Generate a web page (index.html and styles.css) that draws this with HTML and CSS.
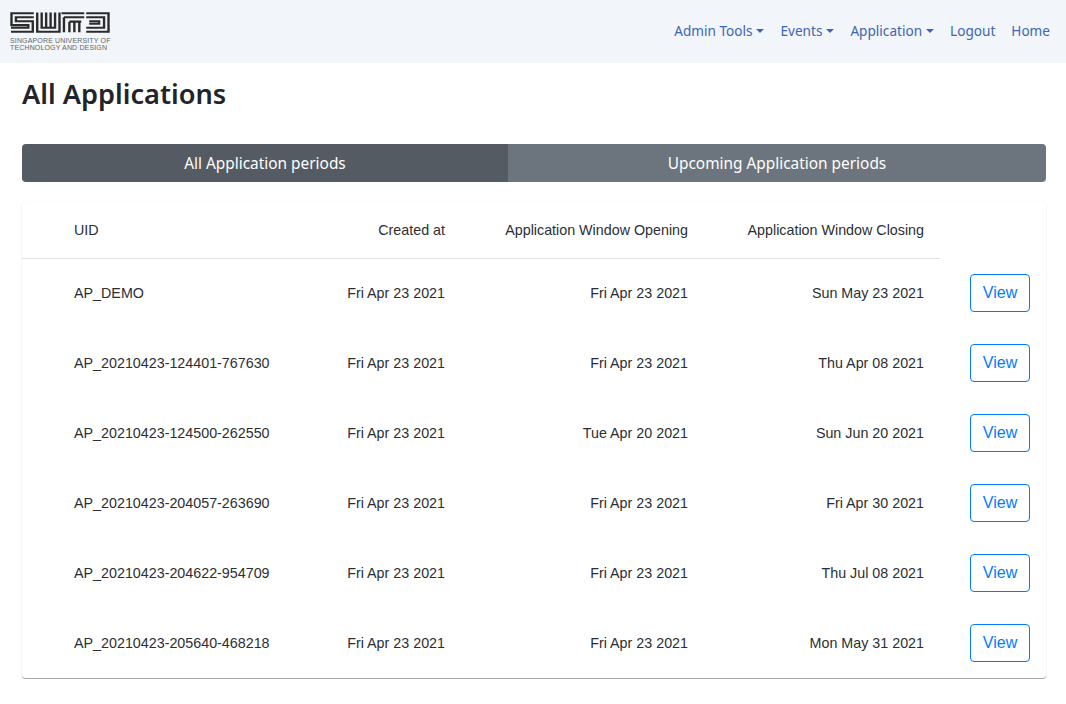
FILE: index.html
```html
<!DOCTYPE html>
<html lang="en">
<head>
<meta charset="utf-8">
<title>All Applications</title>
<link rel="stylesheet" href="styles.css">
</head>
<body>
<nav class="navbar">
  <a class="brand" href="#">
    <svg class="logo-mark" width="100" height="21" viewBox="0 0 101 24" preserveAspectRatio="none" fill="none" stroke="#2b2b2b" stroke-width="2.4">
      <path d="M24 1.5H1.5V15H18.5V18H1M24 6H6V10.5H23V22.5H1"/>
      <path d="M27.5 .5V22.5H50V.5M32 .5V18H45.5V.5M36.5 .5V18M41 .5V18"/>
      <path d="M52 1.5H75M54.5 6H75M54.5 6V23M60 11H72M60 11V23M65 11V23M70 11V23"/>
      <path d="M77 1.5H99.5V22.5H77M77 6H95V18H77M80 10.5H90V13.5H80"/>
    </svg>
    <span class="logo-text">SINGAPORE UNIVERSITY OF<br>TECHNOLOGY AND DESIGN</span>
  </a>
  <ul class="nav">
    <li><a href="#" class="caret">Admin Tools</a></li>
    <li><a href="#" class="caret">Events</a></li>
    <li><a href="#" class="caret">Application</a></li>
    <li><a href="#">Logout</a></li>
    <li><a href="#">Home</a></li>
  </ul>
</nav>
<main class="container">
  <h1>All Applications</h1>
  <div class="tabs">
    <button class="tab active">All Application periods</button>
    <button class="tab">Upcoming Application periods</button>
  </div>
  <section class="card">
    <table>
      <thead>
        <tr><th class="uid">UID</th><th>Created at</th><th>Application Window Opening</th><th>Application Window Closing</th><th class="act"></th></tr>
      </thead>
      <tbody>
        <tr><td class="uid">AP_DEMO</td><td>Fri Apr 23 2021</td><td>Fri Apr 23 2021</td><td>Sun May 23 2021</td><td class="act"><a class="btn" href="#">View</a></td></tr>
        <tr><td class="uid">AP_20210423-124401-767630</td><td>Fri Apr 23 2021</td><td>Fri Apr 23 2021</td><td>Thu Apr 08 2021</td><td class="act"><a class="btn" href="#">View</a></td></tr>
        <tr><td class="uid">AP_20210423-124500-262550</td><td>Fri Apr 23 2021</td><td>Tue Apr 20 2021</td><td>Sun Jun 20 2021</td><td class="act"><a class="btn" href="#">View</a></td></tr>
        <tr><td class="uid">AP_20210423-204057-263690</td><td>Fri Apr 23 2021</td><td>Fri Apr 23 2021</td><td>Fri Apr 30 2021</td><td class="act"><a class="btn" href="#">View</a></td></tr>
        <tr><td class="uid">AP_20210423-204622-954709</td><td>Fri Apr 23 2021</td><td>Fri Apr 23 2021</td><td>Thu Jul 08 2021</td><td class="act"><a class="btn" href="#">View</a></td></tr>
        <tr><td class="uid">AP_20210423-205640-468218</td><td>Fri Apr 23 2021</td><td>Fri Apr 23 2021</td><td>Mon May 31 2021</td><td class="act"><a class="btn" href="#">View</a></td></tr>
      </tbody>
    </table>
  </section>
</main>
</body>
</html>
```
FILE: styles.css
```css
* { box-sizing: border-box; }
html, body { margin: 0; padding: 0; }
body { background: #fff; color: #212529; font-family: "Noto Sans", sans-serif; }
a { text-decoration: none; }
.navbar { height: 63px; background: #f2f5fa; display: flex; justify-content: space-between; align-items: flex-start; padding: 12px 8px 0 10px; }
.brand { display: flex; flex-direction: column; width: 104px; }
.logo-mark { display: block; }
.logo-text { font-family: "Liberation Sans", sans-serif; font-size: 7px; line-height: 7px; letter-spacing: 0.15px; color: #666; margin-top: 4px; white-space: nowrap; }
.nav { list-style: none; margin: -1px 0 0; padding: 0; display: flex; }
.nav a { display: block; padding: 9px 8px; font-size: 13.6px; line-height: 21px; color: #3d66b3; }
.caret::after { content: ""; display: inline-block; margin-left: 4px; vertical-align: 3px; border-top: 4.5px solid; border-left: 4.2px solid transparent; border-right: 4.2px solid transparent; }
.container { padding: 0 20px 0 22px; }
h1 { margin: 12px 0 0; font-size: 27.2px; line-height: 38px; font-weight: 600; color: #212529; }
.tabs { display: flex; margin-top: 31px; height: 38px; border-radius: 4px; overflow: hidden; }
.tab { border: 0; margin: 0; padding: 1px 0 0; color: #fff; font: 15.4px/24px "Noto Sans", sans-serif; background: #6c757d; flex: 538 1 0; }
.tab.active { background: #545b62; flex: 486 1 0; }
.card { margin-top: 20px; border-radius: 4px; background: #fff; border-bottom: 1px solid #a8a8a8; box-shadow: 0 1px 2px 0 rgba(0,0,0,.1), 0 0 2px 0 rgba(0,0,0,.05); }
table { width: 100%; border-collapse: collapse; table-layout: fixed; font: 14.3px/20px "Liberation Sans", sans-serif; color: #2b2f33; }
th { font-weight: 400; height: 56px; border-bottom: 1px solid #e0e0e0; text-align: right; padding: 0 16px; }
td { height: 70px; text-align: right; padding: 0 16px; }
th.uid, td.uid { text-align: left; padding-left: 52px; width: 279px; }
th:nth-child(2), td:nth-child(2) { width: 160px; }
th:nth-child(3), td:nth-child(3) { width: 243px; }
th:nth-child(4), td:nth-child(4) { width: 236px; }
th.act { border-bottom: 0; }
td.act { padding: 0 16px 0 0; }
.btn { display: inline-block; width: 60px; height: 38px; line-height: 36px; text-align: center; font-size: 16px; color: #007bff; border: 1px solid #007bff; border-radius: 4px; }
```
